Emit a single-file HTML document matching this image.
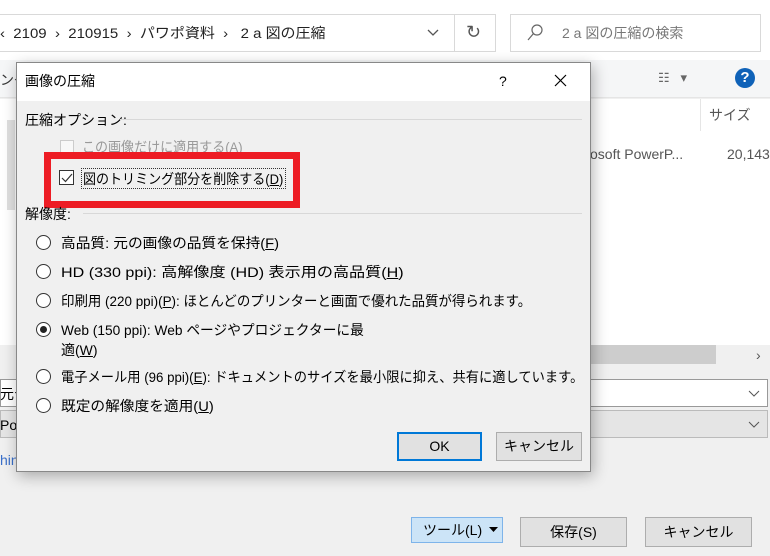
<!DOCTYPE html>
<html><head><meta charset="utf-8"><style>
*{margin:0;padding:0;box-sizing:border-box}
body{width:770px;height:556px;overflow:hidden;background:#f0f0f0;position:relative;font-family:"Liberation Sans","Noto Sans CJK JP",sans-serif;font-size:14px;color:#000}
.a{position:absolute}
.t{position:absolute;white-space:nowrap;line-height:16px;transform-origin:0 50%}
.radio{position:absolute;width:15px;height:15px;border:1.5px solid #333;border-radius:50%;background:#fff}
.u{text-decoration:underline}
.btn{position:absolute;border:1px solid #adadad;background:#e1e1e1;text-align:center;font-size:14px;white-space:nowrap}
</style></head><body>
<div class="a" style="left:0;top:0;width:770px;height:60px;background:#fff"></div>
<div class="a" style="left:-1px;top:14px;width:497px;height:38px;border:1px solid #d9d9d9;background:#fff"></div>
<div class="a" style="left:454px;top:15px;width:1px;height:36px;background:#d9d9d9"></div>
<div class="t" style="left:0;top:25px;color:#222;font-size:14px;transform:scaleX(1.07)">‹&nbsp; 2109 &nbsp;›&nbsp; 210915 &nbsp;›&nbsp; パワポ資料 &nbsp;›&nbsp;&nbsp; 2 a 図の圧縮</div>
<svg class="a" style="left:427px;top:29px" width="12" height="8"><path d="M1 1 L6 6 L11 1" stroke="#555" fill="none" stroke-width="1.3"/></svg>
<div class="t" style="left:466px;top:24px;font-size:18px;color:#555">↻</div>
<div class="a" style="left:510px;top:14px;width:251px;height:38px;border:1px solid #d9d9d9;background:#fff"></div>
<svg class="a" style="left:527px;top:24px" width="16" height="18"><circle cx="10" cy="6" r="5" stroke="#666" fill="none" stroke-width="1.2"/><path d="M6.5 9.5 L1 16" stroke="#666" stroke-width="1.2"/></svg>
<div class="t" style="left:562px;top:25px;color:#777">2 a 図の圧縮の検索</div>
<div class="a" style="left:0;top:60px;width:770px;height:38px;background:#f5f6f7;border-bottom:1px solid #e5e5e5"></div>
<div class="t" style="left:0;top:72px;color:#333">ンダ</div>
<div class="t" style="left:658px;top:70px;color:#666;font-size:13px">☷ &nbsp;&nbsp;▾</div>
<div class="a" style="left:735px;top:68px;width:20px;height:20px;border-radius:50%;background:#0f62b8;color:#fff;font-weight:bold;text-align:center;line-height:20px;font-size:15px">?</div>
<div class="a" style="left:0;top:99px;width:770px;height:246px;background:#fff"></div>
<div class="a" style="left:7px;top:120px;width:8px;height:90px;background:#e0e0e0"></div>
<div class="a" style="left:700px;top:99px;width:1px;height:32px;background:#e5e5e5"></div>
<div class="t" style="left:709px;top:107px;color:#555">サイズ</div>
<div class="t" style="left:590px;top:146px;color:#555">osoft PowerP...</div>
<div class="t" style="left:727px;top:146px;color:#555">20,143</div>
<div class="a" style="left:590px;top:345px;width:126px;height:19px;background:#cdcdcd"></div>
<div class="t" style="left:756px;top:347px;color:#555">›</div>
<div class="a" style="left:0;top:379px;width:768px;height:28px;background:#fff;border:1px solid #999"></div>
<div class="a" style="left:0;top:410px;width:768px;height:28px;background:#e5e5e5;border:1px solid #bbb"></div>
<svg class="a" style="left:748px;top:390px" width="12" height="7"><path d="M1 1 L6 6 L11 1" stroke="#555" fill="none"/></svg>
<svg class="a" style="left:748px;top:421px" width="12" height="7"><path d="M1 1 L6 6 L11 1" stroke="#555" fill="none"/></svg>
<div class="t" style="left:0;top:386px">元デ</div>
<div class="t" style="left:0;top:417px">Pow</div>
<div class="t" style="left:0;top:452px;color:#3a6fc9">hin</div>
<div class="btn" style="left:411px;top:517px;width:92px;height:26px;background:#cce4f7;border-color:#7eb4ea;line-height:24px"></div>
<div class="t" style="left:423px;top:522px">ツール(L)</div>
<svg class="a" style="left:489px;top:527px" width="9" height="6"><path d="M0 0 L9 0 L4.5 5Z" fill="#000"/></svg>
<div class="btn" style="left:520px;top:517px;width:107px;height:30px;line-height:28px">保存(S)</div>
<div class="btn" style="left:645px;top:517px;width:107px;height:30px;line-height:28px">キャンセル</div>

<div class="a" style="left:16px;top:62px;width:575px;height:410px;background:#f0f0f0;border:1px solid #888;box-shadow:2px 4px 14px rgba(0,0,0,0.3)">
 <div class="a" style="left:0;top:0;width:573px;height:38px;background:#fff"></div>
</div>
<div class="t" style="left:25px;top:73px">画像の圧縮</div>
<div class="t" style="left:499px;top:73px">?</div>
<svg class="a" style="left:554px;top:74px" width="13" height="13"><path d="M1 1 L12 12 M12 1 L1 12" stroke="#000" stroke-width="1.2"/></svg>
<div class="t" style="left:25px;top:112px">圧縮オプション:</div>
<div class="a" style="left:120px;top:119px;width:462px;height:1px;background:#d8d8d8"></div>
<div class="a" style="left:60px;top:140px;width:14px;height:14px;border:1px solid #ccc;background:#f8f8f8"></div>
<div class="t" style="left:82px;top:139px;color:#999;transform:scaleX(0.93)">この画像だけに適用する(A)</div>
<div class="a" style="left:44px;top:152px;width:256px;height:56px;border:7px solid #ed1c24"></div>
<div class="a" style="left:59px;top:170px;width:15px;height:15px;border:1px solid #333;background:#fff"></div>
<svg class="a" style="left:61px;top:172px" width="12" height="11"><path d="M1 6 L4.5 9.5 L11 2" stroke="#333" fill="none" stroke-width="1.2"/></svg>
<div class="a" style="left:81px;top:168px;width:205px;height:21px;border:1px dotted #333"></div>
<div class="t" style="left:83px;top:171px;transform:scaleX(0.93)">図のトリミング部分を削除する(<span class="u">D</span>)</div>
<div class="t" style="left:25px;top:206px">解像度:</div>
<div class="a" style="left:83px;top:213px;width:499px;height:1px;background:#d8d8d8"></div>
<div class="radio" style="left:36px;top:235px"></div><div class="t" style="left:61px;top:235px;transform:scaleX(1.05)">高品質: 元の画像の品質を保持(<span class="u">F</span>)</div>
<div class="radio" style="left:36px;top:264px"></div><div class="t" style="left:61px;top:264px;transform:scaleX(1.15)">HD (330 ppi): 高解像度 (HD) 表示用の高品質(<span class="u">H</span>)</div>
<div class="radio" style="left:36px;top:293px"></div><div class="t" style="left:61px;top:293px;transform:scaleX(0.96)">印刷用 (220 ppi)(<span class="u">P</span>): ほとんどのプリンターと画面で優れた品質が得られます。</div>
<div class="radio" style="left:36px;top:322px"></div><div class="a" style="left:40px;top:326px;width:7px;height:7px;border-radius:50%;background:#222"></div>
<div class="t" style="left:61px;top:322px;transform:scaleX(0.98)">Web (150 ppi): Web ページやプロジェクターに最</div>
<div class="t" style="left:61px;top:342px">適(<span class="u">W</span>)</div>
<div class="radio" style="left:36px;top:369px"></div><div class="t" style="left:61px;top:369px;transform:scaleX(0.947)">電子メール用 (96 ppi)(<span class="u">E</span>): ドキュメントのサイズを最小限に抑え、共有に適しています。</div>
<div class="radio" style="left:36px;top:398px"></div><div class="t" style="left:61px;top:398px;transform:scaleX(1.05)">既定の解像度を適用(<span class="u">U</span>)</div>
<div class="btn" style="left:397px;top:432px;width:85px;height:29px;border:2px solid #0078d7;line-height:25px">OK</div>
<div class="btn" style="left:496px;top:432px;width:86px;height:29px;line-height:27px">キャンセル</div>
</body></html>
